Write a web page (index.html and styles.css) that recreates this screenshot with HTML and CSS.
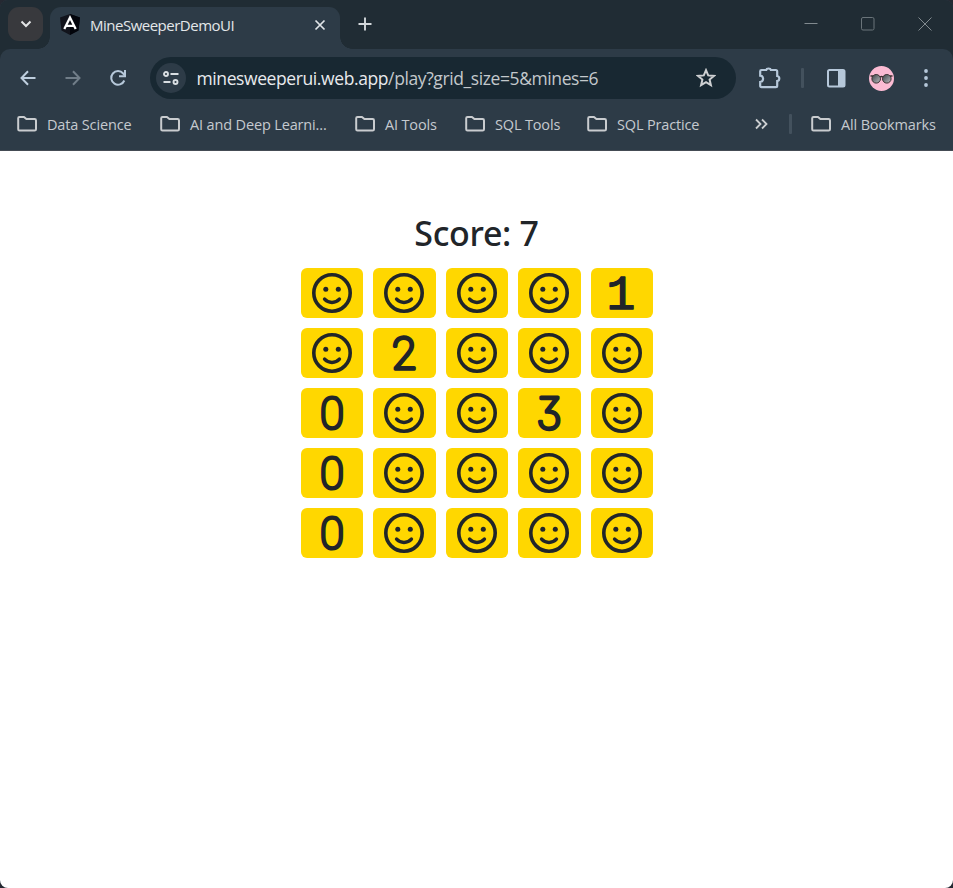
FILE: index.html
```html
<!DOCTYPE html>
<html lang="en">
<head>
<meta charset="utf-8">
<title>MineSweeperDemoUI</title>
<link rel="stylesheet" href="styles.css">
</head>
<body>
<svg class="defs" aria-hidden="true">
  <symbol id="folder" viewBox="0 0 22 18"><path d="M2.200 3.200Q2.200 1.900 3.500 1.900H8L10.400 4.100H18.600Q20 4.100 20 5.500V14.300Q20 15.600 18.600 15.600H3.500Q2.200 15.600 2.200 14.300Z" fill="none" stroke="#c9cccf" stroke-width="2" stroke-linejoin="round"/></symbol>
  <symbol id="smile" viewBox="0 0 40 40"><circle cx="20" cy="20" r="18.200" fill="none" stroke="#212529" stroke-width="3.600"/><circle cx="13.800" cy="16.300" r="2.500" fill="#212529"/><circle cx="26.300" cy="16.300" r="2.500" fill="#212529"/><path d="M12.600 26.200C16.300 30.500 23.700 30.500 27.400 26.200" fill="none" stroke="#212529" stroke-width="3.500" stroke-linecap="round"/></symbol>
</svg>
<div class="window">
  <header class="tabs">
    <button class="tab-search" aria-label="Search tabs"><svg width="12" height="8" viewBox="0 0 12 8"><path d="M1.500 1.500L6 6L10.500 1.500" fill="none" stroke="#e3e5e6" stroke-width="2"/></svg></button>
    <div class="tab">
      <svg class="favicon" width="20" height="21" viewBox="0 0 20 21"><path d="M10 0L20 3.500L18.500 16.500L10 21L1.500 16.500L0 3.500Z" fill="#12141c"/><path d="M10 0L20 3.500L18.500 16.500L10 21Z" fill="#02040b"/><path d="M4.300 15L10 3.500L15.700 15M6.200 11.800H13.800" fill="none" stroke="#fff" stroke-width="2.300"/></svg>
      <span class="tab-title">MineSweeperDemoUI</span>
      <svg class="tab-close" width="12" height="12" viewBox="0 0 12 12"><path d="M1.500 1.500L10.500 10.500M10.500 1.500L1.500 10.500" stroke="#e0e4e7" stroke-width="1.700"/></svg>
    </div>
    <svg class="new-tab" width="14" height="14" viewBox="0 0 14 14"><path d="M7 .5V13.500M.5 7H13.500" stroke="#d3d8db" stroke-width="1.900"/></svg>
    <div class="controls">
      <svg width="14" height="14" viewBox="0 0 14 14"><path d="M.5 6.500H13.500" stroke="#818a8f"/></svg>
      <svg width="14" height="14" viewBox="0 0 14 14"><rect x=".5" y=".5" width="12.500" height="12.500" rx="1.500" fill="none" stroke="#6a747a"/></svg>
      <svg width="14" height="14" viewBox="0 0 14 14"><path d="M.5 .5L13.500 13.500M13.500 .5L.5 13.500" stroke="#818a8f"/></svg>
    </div>
  </header>
  <div class="toolbar">
    <svg class="back" width="16" height="16" viewBox="0 0 16 16"><path d="M15.500 8H2M8 1.200L1.500 8L8 14.800" fill="none" stroke="#bdcddd" stroke-width="2"/></svg>
    <svg class="forward" width="16" height="16" viewBox="0 0 16 16"><path d="M.5 8H14M8 1.200L14.500 8L8 14.800" fill="none" stroke="#707d88" stroke-width="2"/></svg>
    <svg class="reload" width="18" height="18" viewBox="0 0 18 18"><path d="M15.300 11.500A6.800 6.800 0 1 1 14.200 4.500L16 6.600" fill="none" stroke="#b6c8da" stroke-width="2"/><path d="M16 1V7.200H10" fill="none" stroke="#b6c8da" stroke-width="2"/></svg>
    <div class="omnibox">
      <span class="site"><svg width="16" height="14" viewBox="0 0 16 14" fill="none" stroke="#d9dee2" stroke-width="1.900"><circle cx="3" cy="3" r="2"/><path d="M7.500 3H15.500M.5 11H7.500"/><circle cx="12.500" cy="11" r="2"/></svg></span>
      <span class="url"><b>minesweeperui.web.app</b>/play?grid_size=5&amp;mines=6</span>
      <svg class="star" width="20" height="20" viewBox="0 0 20 20"><path d="M10 2.200L12.200 7.400L17.900 7.900L13.600 11.600L14.900 17.200L10 14.200L5.100 17.200L6.400 11.600L2.100 7.900L7.800 7.400Z" fill="none" stroke="#ced0d2" stroke-width="2"/></svg>
    </div>
    <svg class="puzzle" width="22" height="22" viewBox="0 0 22 22"><path d="M2.500 3H7.200C7.600 1 11.500 1 11.900 3H16.800Q18.200 3 18.200 4.400V9C21 9.500 21 13.500 18.200 14V18.800Q18.200 20.200 16.800 20.200H2.500Q1.200 20.200 1.200 18.800V15C5.100 14.700 5.100 9 1.200 8.700V4.300Q1.200 3 2.500 3Z" fill="none" stroke="#b6c8da" stroke-width="2.200"/></svg>
    <i class="divider"></i>
    <svg class="panel" width="19" height="19" viewBox="0 0 19 19"><rect x="1" y="1" width="16.500" height="16.500" rx="1.500" fill="none" stroke="#b6c8da" stroke-width="2"/><path d="M11 1H17.500V17.500H11Z" fill="#b6c8da"/></svg>
    <svg class="avatar" width="25" height="25" viewBox="0 0 25 25"><defs><linearGradient id="lens" x1="0" y1="0" x2="1" y2="1"><stop stop-color="#3b4649"/><stop offset="1" stop-color="#bbb8bd"/></linearGradient></defs><circle cx="12.500" cy="12.500" r="12.500" fill="#fbbbd3"/><g stroke="#3b3031" stroke-width="1" fill="url(#lens)"><circle cx="7.200" cy="12.800" r="4.300"/><circle cx="17.800" cy="12.800" r="4.300"/><path d="M1.500 10H4M21 10H23.500M11 11Q12.500 10 14 11" fill="none" stroke-width="1.300"/></g></svg>
    <svg class="menu" width="4" height="18" viewBox="0 0 4 18" fill="#b6c8da"><circle cx="2" cy="2" r="1.900"/><circle cx="2" cy="9" r="1.900"/><circle cx="2" cy="16" r="1.900"/></svg>
  </div>
  <nav class="bookmarks">
    <a class="bm bm1"><svg><use href="#folder"/></svg><span>Data Science</span></a>
    <a class="bm bm2"><svg><use href="#folder"/></svg><span>AI and Deep Learni...</span></a>
    <a class="bm bm3"><svg><use href="#folder"/></svg><span>AI Tools</span></a>
    <a class="bm bm4"><svg><use href="#folder"/></svg><span>SQL Tools</span></a>
    <a class="bm bm5"><svg><use href="#folder"/></svg><span>SQL Practice</span></a>
    <svg class="more" width="13" height="12" viewBox="0 0 13 12"><path d="M1 1.500L5.500 6L1 10.500M7 1.500L11.500 6L7 10.500" fill="none" stroke="#cbced0" stroke-width="1.800"/></svg>
    <i class="divider"></i>
    <a class="bm all"><svg><use href="#folder"/></svg><span>All Bookmarks</span></a>
  </nav>
  <main>
    <h1>Score: 7</h1>
    <div class="grid">
      <button><svg><use href="#smile"/></svg></button><button><svg><use href="#smile"/></svg></button><button><svg><use href="#smile"/></svg></button><button><svg><use href="#smile"/></svg></button><button><svg class="digit"><text class="one" x="30" y="41">1</text></svg></button>
      <button><svg><use href="#smile"/></svg></button><button><svg class="digit"><text x="31" y="41">2</text></svg></button><button><svg><use href="#smile"/></svg></button><button><svg><use href="#smile"/></svg></button><button><svg><use href="#smile"/></svg></button>
      <button><svg class="digit"><text class="zero" x="31" y="40.500">0</text></svg></button><button><svg><use href="#smile"/></svg></button><button><svg><use href="#smile"/></svg></button><button><svg class="digit"><text class="three" x="31" y="40.500">3</text></svg></button><button><svg><use href="#smile"/></svg></button>
      <button><svg class="digit"><text class="zero" x="31" y="40.500">0</text></svg></button><button><svg><use href="#smile"/></svg></button><button><svg><use href="#smile"/></svg></button><button><svg><use href="#smile"/></svg></button><button><svg><use href="#smile"/></svg></button>
      <button><svg class="digit"><text class="zero" x="31" y="40.500">0</text></svg></button><button><svg><use href="#smile"/></svg></button><button><svg><use href="#smile"/></svg></button><button><svg><use href="#smile"/></svg></button><button><svg><use href="#smile"/></svg></button>
    </div>
  </main>
</div>
</body>
</html>
```
FILE: styles.css
```css
* { box-sizing: border-box; }
body { margin: 0; background: #252932; font-family: "Open Sans", "Noto Sans", sans-serif; overflow: hidden; }
button { border: 0; padding: 0; }
svg { display: block; flex: none; }
.defs { display: none; }
.window { height: 888px; border-radius: 8px; overflow: hidden; background: #2d3b47; display: flex; flex-direction: column; }
.tabs { height: 59px; margin-bottom: -10px; padding-left: 8px; background: #202c34; display: flex; align-items: flex-start; flex: none; }
.tab-search { width: 35px; height: 34px; margin-top: 7px; border-radius: 11px; background: #38393d; display: grid; place-items: center; }
.tab { position: relative; width: 290px; height: 42px; margin: 7px 0 0 7px; padding: 0 14px 7px 10px; border-radius: 11px 11px 0 0; background: #2d3b47; display: flex; align-items: center; }
.tab::before, .tab::after { content: ""; position: absolute; bottom: 0; width: 12px; height: 12px; }
.tab::before { left: -12px; background: radial-gradient(circle at 0 0, transparent 11.5px, #2d3b47 12px); }
.tab::after { right: -12px; background: radial-gradient(circle at 100% 0, transparent 11.5px, #2d3b47 12px); }
.tab-title { margin-left: 10px; color: #e4e7e9; font-size: 15px; letter-spacing: -.5px; white-space: nowrap; }
.tab-close { margin-left: auto; }
.new-tab { margin: 17px 0 0 18px; }
.controls { display: flex; gap: 43px; margin: 17px 21px 0 auto; }
.toolbar { position: relative; height: 58px; flex: none; padding-left: 20px; background: #2d3b47; border-radius: 10px 10px 0 0; display: flex; align-items: center; }
.forward { margin-left: 29px; }
.reload { margin-left: 28px; }
.omnibox { width: 586px; height: 42px; margin-left: 23px; padding: 0 20px 0 6px; border-radius: 21px; background: #182832; display: flex; align-items: center; }
.site { width: 30px; height: 30px; border-radius: 50%; background: #2d3b47; display: grid; place-items: center; }
.url { margin-left: 10.5px; color: #c3c8cc; font-size: 17.500px; letter-spacing: -.4px; white-space: nowrap; }
.url b { color: #e8eaed; font-weight: 400; }
.star { margin-left: auto; }
.puzzle { margin-left: 23px; }
.divider { width: 3px; height: 20px; background: #43515d; border-radius: 1px; flex: none; }
.toolbar .divider { margin-left: 20px; }
.panel { margin-left: 23px; }
.avatar { margin-left: 23px; }
.menu { margin-left: 30px; }
.bookmarks { height: 44px; flex: none; padding: 0 17px 9px 16px; background: #2d3b47; border-bottom: 1px solid #444b53; display: flex; align-items: center; color: #c5cacf; font-size: 14.500px; letter-spacing: -.15px; white-space: nowrap; }
.bm { display: flex; align-items: center; height: 20px; gap: 9px; flex: none; }
.bm svg { width: 22px; height: 18px; }
.bm1 { width: 143px; }
.bm2 { width: 195px; }
.bm3 { width: 110px; }
.bm4 { width: 122px; }
.bm5 { width: 169px; }
.bookmarks .divider { margin-left: 21px; }
.all { margin-left: 18px; }
main { flex: 1; background: #fff; display: flex; flex-direction: column; align-items: center; color: #212529; }
h1 { margin: 58px 0 11px; height: 48px; font: 500 34px/48px "Noto Sans", sans-serif; letter-spacing: -.3px; }
.grid { width: 352.5px; margin-left: .5px; display: grid; grid-template-columns: repeat(5, 1fr); grid-auto-rows: 50px; gap: 10px; }
.grid button { background: #ffd700; border-radius: 6px; display: grid; place-items: center; }
.grid svg { width: 40px; height: 40px; }
.grid .digit { width: 62px; height: 50px; overflow: visible; }
.grid text { font: 100 44px Roboto, sans-serif; text-anchor: middle; fill: #212529; stroke: #212529; stroke-width: 3.500px; stroke-linejoin: round; }
.grid .zero { stroke-width: 3.200px; }
.grid .one { font: 400 48px "Liberation Mono", monospace; stroke-width: 1.400px; }
.grid .three { font: 200 43px Inter, sans-serif; font-feature-settings: "cv09"; stroke-width: 3px; }
```
